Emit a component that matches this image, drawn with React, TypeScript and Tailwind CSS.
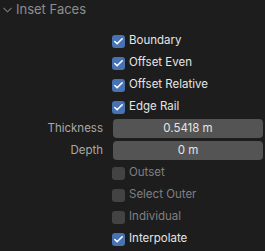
import { Check } from "lucide-react";

function CheckRow({ label, checked, disabled }: { label: string; checked?: boolean; disabled?: boolean }) {
  return (
    <div className="flex items-center h-[22px] pl-[112px]">
      <div
        className={`w-[13px] h-[13px] rounded-[3px] flex items-center justify-center ${
          checked ? "bg-[#4772b3]" : disabled ? "bg-[#434343]" : "bg-[#545454]"
        }`}
      >
        {checked && <Check className="w-[11px] h-[11px] text-white" strokeWidth={3.5} />}
      </div>
      <span className={`ml-[4px] text-[11.5px] ${disabled ? "text-[#808080]" : "text-[#e5e5e5]"}`}>{label}</span>
    </div>
  );
}

function Field({ label, value }: { label: string; value: string }) {
  return (
    <div className="flex items-center h-[19px]">
      <div className="w-[103px] text-right text-[11.5px] text-[#a8a8a8]">{label}</div>
      <div className="ml-[10px] w-[150px] h-[19px] rounded-[4px] bg-[#545454] flex items-center justify-center text-[11.5px] text-[#e5e5e5]">
        {value}
      </div>
    </div>
  );
}

export default function App() {
  return (
    <div className="w-[265px] h-[251px] bg-[#1d1d1d] overflow-hidden" style={{ fontFamily: "Inter, 'DejaVu Sans', sans-serif" }}>
      <div className="flex items-center h-[20px] pl-[3px]">
        <svg width="9" height="6" viewBox="0 0 9 6" className="text-[#7a7a7a]">
          <path d="M0.5 0.8 L4.5 4.8 L8.5 0.8" fill="none" stroke="currentColor" strokeWidth="1.1" />
        </svg>
        <span className="ml-[4px] text-[13px] text-[#8e8e8e]">Inset Faces</span>
      </div>
      <div className="mt-[10px]">
        <CheckRow label="Boundary" checked />
        <CheckRow label="Offset Even" checked />
        <CheckRow label="Offset Relative" checked />
        <CheckRow label="Edge Rail" checked />
      </div>
      <div className="mt-[1px] flex flex-col gap-[3px]">
        <Field label="Thickness" value="0.5418 m" />
        <Field label="Depth" value="0 m" />
      </div>
      <div className="mt-[2px]">
        <CheckRow label="Outset" disabled />
        <CheckRow label="Select Outer" disabled />
        <CheckRow label="Individual" disabled />
        <CheckRow label="Interpolate" checked />
      </div>
    </div>
  );
}
